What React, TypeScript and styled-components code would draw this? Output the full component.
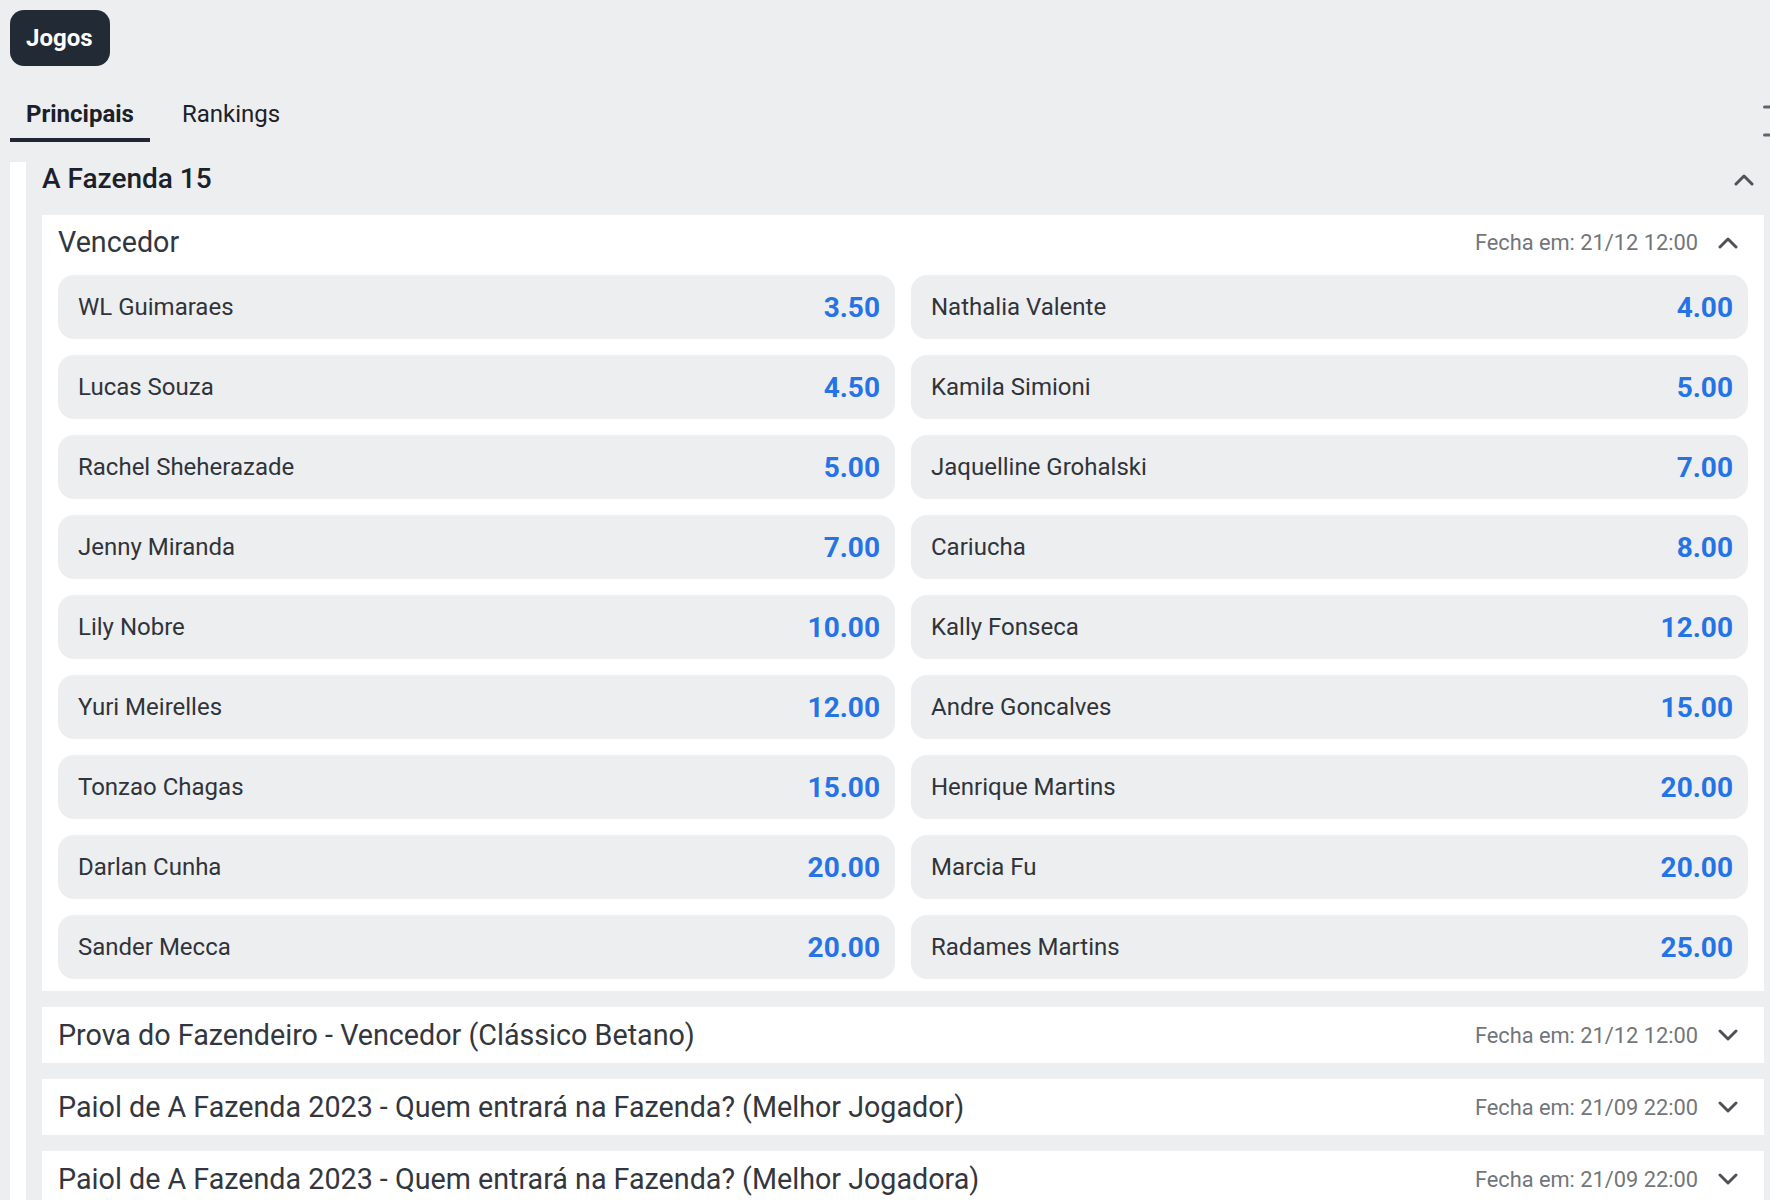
import React from "react";
import styled, { createGlobalStyle } from "styled-components";

const Global = createGlobalStyle`
  html, body { margin: 0; padding: 0; background: #edeef0; }
  body { font-family: Roboto, "Noto Sans", "Liberation Sans", sans-serif; -webkit-font-smoothing: antialiased; }
  * { box-sizing: border-box; }
`;

const Page = styled.div`
  width: 1770px;
  min-height: 1200px;
  overflow: hidden;
  padding: 10px 0 0 10px;
  background: #edeef0;
`;

const JogosButton = styled.button`
  display: inline-flex;
  align-items: center;
  height: 56px;
  padding: 0 17px 0 16px;
  border: none;
  border-radius: 14px;
  background: #222a36;
  color: #ffffff;
  font-family: Roboto, sans-serif;
  font-size: 24px;
  font-weight: 700;
  cursor: pointer;
`;

const TabBar = styled.div`
  display: flex;
  align-items: stretch;
  gap: 16px;
  margin-top: 24px;
`;

const Tab = styled.div<{ $active?: boolean }>`
  padding: 9px 16px;
  line-height: 30px;
  font-size: 24px;
  font-weight: ${(p) => (p.$active ? 700 : 400)};
  color: #1c2028;
  border-bottom: 4px solid ${(p) => (p.$active ? "#1f2733" : "transparent")};
`;

const Spacer = styled.div`
  flex: 1;
`;

const EdgeIcon = styled.div`
  width: 7px;
  flex-shrink: 0;
  display: flex;
`;

const Section = styled.div`
  display: flex;
  margin-top: 20px;
  margin-right: 6px;
`;

const SideRail = styled.div`
  width: 16px;
  flex-shrink: 0;
  background: #ffffff;
`;

const SectionBody = styled.div`
  flex: 1;
  margin-left: 16px;
  min-width: 0;
`;

const SectionHeader = styled.div`
  height: 34px;
  display: flex;
  align-items: center;
  justify-content: space-between;
  margin-bottom: 19px;
`;

const SectionTitle = styled.h2`
  margin: 0;
  font-size: 28px;
  line-height: 34px;
  font-weight: 500;
  color: #1c2028;
`;

const Card = styled.div`
  background: #ffffff;
  padding: 0 16px 12px;
`;

const CardHeader = styled.div<{ $h: number }>`
  height: ${(p) => p.$h}px;
  display: flex;
  align-items: center;
  justify-content: space-between;
`;

const MarketTitle = styled.div`
  font-size: 28.7px;
  color: #33373d;
  white-space: nowrap;
`;

const MetaWrap = styled.div`
  display: flex;
  align-items: center;
  gap: 20px;
  margin-right: 10px;
`;

const Closes = styled.span`
  font-size: 21.8px;
  color: #72767b;
  white-space: nowrap;
`;

const OddsGrid = styled.div`
  display: grid;
  grid-template-columns: 1fr 1fr;
  gap: 16px;
  margin-top: 6px;
`;

const OddRow = styled.div`
  height: 64px;
  border-radius: 16px;
  background: #edeef0;
  display: flex;
  align-items: center;
  justify-content: space-between;
  padding: 0 15px 0 20px;
`;

const Name = styled.span`
  font-size: 24px;
  color: #30343a;
`;

const Price = styled.span`
  font-size: 28px;
  font-weight: 700;
  color: #2573e4;
`;

const CollapsedCard = styled.div`
  background: #ffffff;
  margin-top: 16px;
  padding: 0 16px;
`;

const Chevron = ({ up }: { up?: boolean }) => (
  <svg width="20" height="13" viewBox="0 0 20 13" fill="none">
    <polyline
      points={up ? "2,11 10,3 18,11" : "2,2 10,10 18,2"}
      stroke="#4f5358"
      strokeWidth="3"
      strokeLinecap="round"
      strokeLinejoin="round"
    />
  </svg>
);

const odds: [string, string][] = [
  ["WL Guimaraes", "3.50"],
  ["Nathalia Valente", "4.00"],
  ["Lucas Souza", "4.50"],
  ["Kamila Simioni", "5.00"],
  ["Rachel Sheherazade", "5.00"],
  ["Jaquelline Grohalski", "7.00"],
  ["Jenny Miranda", "7.00"],
  ["Cariucha", "8.00"],
  ["Lily Nobre", "10.00"],
  ["Kally Fonseca", "12.00"],
  ["Yuri Meirelles", "12.00"],
  ["Andre Goncalves", "15.00"],
  ["Tonzao Chagas", "15.00"],
  ["Henrique Martins", "20.00"],
  ["Darlan Cunha", "20.00"],
  ["Marcia Fu", "20.00"],
  ["Sander Mecca", "20.00"],
  ["Radames Martins", "25.00"],
];

const collapsed: [string, string][] = [
  ["Prova do Fazendeiro - Vencedor (Clássico Betano)", "Fecha em: 21/12 12:00"],
  ["Paiol de A Fazenda 2023 - Quem entrará na Fazenda? (Melhor Jogador)", "Fecha em: 21/09 22:00"],
  ["Paiol de A Fazenda 2023 - Quem entrará na Fazenda? (Melhor Jogadora)", "Fecha em: 21/09 22:00"],
];

export default function App() {
  return (
    <>
      <Global />
      <Page>
        <JogosButton>Jogos</JogosButton>
        <TabBar>
          <Tab $active>Principais</Tab>
          <Tab>Rankings</Tab>
          <Spacer />
          <EdgeIcon>
            <svg width="7" height="52" viewBox="0 0 7 52">
              <rect x="0" y="15.5" width="8" height="3" rx="1.5" fill="#62666b" />
              <rect x="0" y="43.5" width="8" height="3" rx="1.5" fill="#62666b" />
            </svg>
          </EdgeIcon>
        </TabBar>
        <Section>
          <SideRail />
          <SectionBody>
            <SectionHeader>
              <SectionTitle>A Fazenda 15</SectionTitle>
              <MetaWrap>
                <Chevron up />
              </MetaWrap>
            </SectionHeader>
            <Card>
              <CardHeader $h={54}>
                <MarketTitle>Vencedor</MarketTitle>
                <MetaWrap>
                  <Closes>Fecha em: 21/12 12:00</Closes>
                  <Chevron up />
                </MetaWrap>
              </CardHeader>
              <OddsGrid>
                {odds.map(([n, p]) => (
                  <OddRow key={n}>
                    <Name>{n}</Name>
                    <Price>{p}</Price>
                  </OddRow>
                ))}
              </OddsGrid>
            </Card>
            {collapsed.map(([t, c]) => (
              <CollapsedCard key={t}>
                <CardHeader $h={56}>
                  <MarketTitle>{t}</MarketTitle>
                  <MetaWrap>
                    <Closes>{c}</Closes>
                    <Chevron />
                  </MetaWrap>
                </CardHeader>
              </CollapsedCard>
            ))}
          </SectionBody>
        </Section>
      </Page>
    </>
  );
}
